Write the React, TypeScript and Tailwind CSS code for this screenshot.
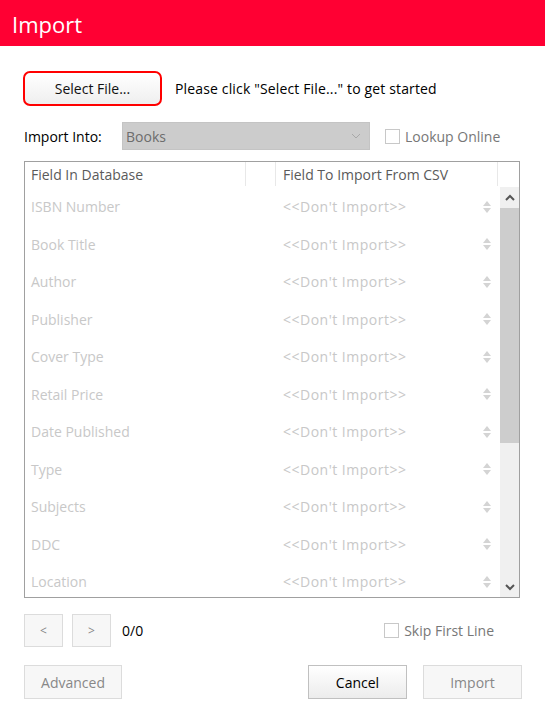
import React from "react";

const rows = [
  "ISBN Number",
  "Book Title",
  "Author",
  "Publisher",
  "Cover Type",
  "Retail Price",
  "Date Published",
  "Type",
  "Subjects",
  "DDC",
  "Location",
];

function Spinner() {
  return (
    <svg width="10" height="14" viewBox="0 0 10 14" className="block">
      <path d="M5 1 L9 6 L1 6 Z" fill="#d4d4d4" />
      <path d="M1 8 L9 8 L5 13 Z" fill="#d4d4d4" />
    </svg>
  );
}

export default function App() {
  return (
    <div
      className="w-[545px] h-[715px] bg-white overflow-hidden text-[14px] text-[#1a1a1a]"
      style={{ fontFamily: '"Open Sans", "Noto Sans", sans-serif' }}
    >
      <div className="h-[46px] bg-[#ff0033] flex items-center pl-3 pt-[3px] text-[22px] text-white">
        Import
      </div>

      <div className="px-6">
        <div className="mt-[25px] flex items-center">
          <button className="-ml-px w-[139px] h-[35px] rounded-[7px] border-2 border-[#ff0000] bg-gradient-to-b from-white to-[#efefef] text-[14px] text-[#111]">
            Select File...
          </button>
          <span className="ml-[13px] text-[14px] text-black tracking-[0.15px]">
            Please click "Select File..." to get started
          </span>
        </div>

        <div className="mt-4 flex items-center h-[28px]">
          <span className="w-[98px] text-black">Import Into:</span>
          <div className="w-[248px] h-[28px] bg-[#cccccc] border border-[#c4c4c4] flex items-center justify-between pl-[3px] pr-[8px] text-[#6d6d6d]">
            <span>Books</span>
            <svg width="10" height="6" viewBox="0 0 10 6">
              <path d="M1 1 L5 5 L9 1" stroke="#a8a8a8" strokeWidth="1" fill="none" />
            </svg>
          </div>
          <div className="ml-[15px] w-[15px] h-[15px] border border-[#c8c8c8] bg-white" />
          <span className="ml-[5px] text-[#777]">Lookup Online</span>
        </div>

        <div className="mt-[11px] w-[496px] h-[437px] border border-[#a0a0a0] flex flex-col">
          <div className="h-[25px] flex text-[#5a5a5a] shrink-0">
            <div className="w-[220px] pl-[6px] flex items-center">Field In Database</div>
            <div className="w-px h-[24px] bg-[#e8e8e8]" />
            <div className="w-[29px]" />
            <div className="w-px h-[24px] bg-[#e8e8e8]" />
            <div className="w-[221px] pl-[7px] flex items-center">Field To Import From CSV</div>
            <div className="w-px h-[24px] bg-[#e8e8e8]" />
            <div className="flex-1" />
          </div>
          <div className="flex-1 flex overflow-hidden">
            <div className="flex-1 overflow-hidden pt-px">
              {rows.map((r) => (
                <div key={r} className="h-[37.5px] flex items-center text-[#c8c8c8]">
                  <div className="w-[252px] pl-[6px]">{r}</div>
                  <div className="w-[200px] pl-[6px] tracking-[0.5px]">{"<<Don't Import>>"}</div>
                  <div className="ml-[5px]">
                    <Spinner />
                  </div>
                </div>
              ))}
            </div>
            <div className="w-[19px] bg-[#f0f0f0] flex flex-col">
              <div className="h-[21px] flex items-center justify-center">
                <svg width="10" height="7" viewBox="0 0 10 7">
                  <path d="M1 6 L5 2 L9 6" stroke="#555" strokeWidth="2" fill="none" />
                </svg>
              </div>
              <div className="h-[235px] bg-[#cdcdcd]" />
              <div className="flex-1" />
              <div className="h-[20px] flex items-center justify-center">
                <svg width="10" height="7" viewBox="0 0 10 7">
                  <path d="M1 1 L5 5 L9 1" stroke="#555" strokeWidth="2" fill="none" />
                </svg>
              </div>
            </div>
          </div>
        </div>

        <div className="mt-4 flex items-center h-[33px]">
          <button className="w-[39px] h-[33px] border border-[#dcdcdc] bg-[#f7f7f7] text-[#888] text-[12px]">
            &lt;
          </button>
          <button className="ml-[9px] w-[39px] h-[33px] border border-[#dcdcdc] bg-[#f7f7f7] text-[#888] text-[12px]">
            &gt;
          </button>
          <span className="ml-[11px] text-black">0/0</span>
          <div className="ml-auto mr-[27px] flex items-center">
            <div className="w-[15px] h-[15px] border border-[#c8c8c8] bg-white" />
            <span className="ml-[5px] text-[#777]">Skip First Line</span>
          </div>
        </div>

        <div className="mt-[18px] flex items-center">
          <button className="w-[98px] h-[34px] border border-[#dcdcdc] bg-[#f7f7f7] text-[#888]">
            Advanced
          </button>
          <button className="ml-auto w-[99px] h-[34px] border border-[#c0c0c0] bg-gradient-to-b from-white to-[#ececec] text-black">
            Cancel
          </button>
          <button className="ml-[16px] mr-[-1px] w-[99px] h-[34px] border border-[#dcdcdc] bg-[#f7f7f7] text-[#888]">
            Import
          </button>
        </div>
      </div>
    </div>
  );
}
